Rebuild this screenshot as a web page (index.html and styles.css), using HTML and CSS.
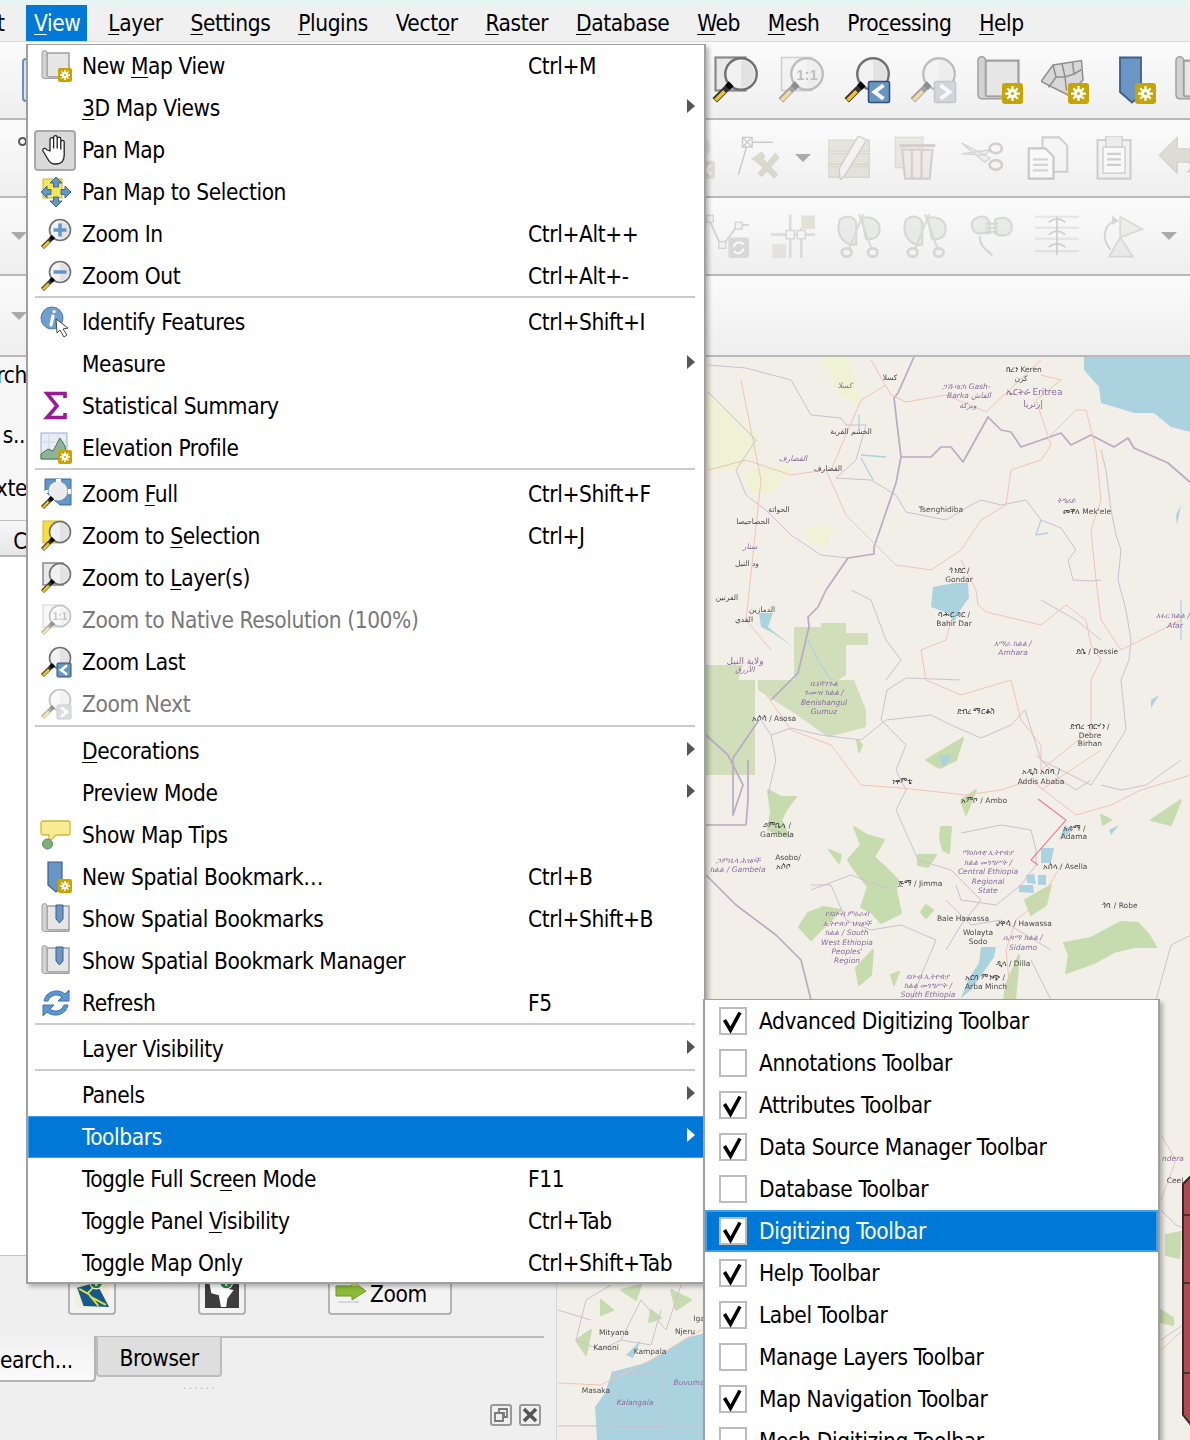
FILE: index.html
```html
<!DOCTYPE html>
<html lang="en">
<head>
<meta charset="utf-8">
<title>QGIS View menu</title>
<link rel="stylesheet" href="styles.css">
</head>
<body>
<svg class="defs" xmlns="http://www.w3.org/2000/svg">
  <symbol id="badge" viewBox="0 0 32 32"><rect x="18" y="18" width="14" height="14" rx="2" fill="#c8a400"/><g stroke="#fff" stroke-width="1.500"><path d="M25 20v10M20 25h10M21.500 21.500l7 7M28.500 21.500l-7 7"/></g><circle cx="25" cy="25" r="3" fill="#fff"/><circle cx="25" cy="25" r="1" fill="#c8a400"/></symbol>
  <symbol id="scroll" viewBox="0 0 32 32"><path d="M7 3H29V27H7Z" fill="#e6e6e6" stroke="#a0a0a0" stroke-width="1.500"/><path d="M7 3a2.500 2.500 0 0 0-5 0V26a2.500 2.500 0 0 0 2.500 2.500H29V27H8.500a1.500 1.500 0 0 1-1.500-1.500Z" fill="#d2d2d2" stroke="#a0a0a0" stroke-width="1"/></symbol>
  <symbol id="lens" viewBox="0 0 32 32"><circle cx="20" cy="12" r="10.500" fill="#f1f1f1" stroke="#707070" stroke-width="1.600"/><path d="M20 3a9 9 0 0 1 0 18Z" fill="#e2e2e2"/><path d="M13 19 2.500 29.500" stroke="#333" stroke-width="4.200"/><path d="M9 23.500 3 29.500" stroke="#f3c320" stroke-width="2.500"/><path d="M13.500 18.500 11 21" stroke="#000" stroke-width="4.500"/></symbol>
  <symbol id="newmap" viewBox="0 0 32 32"><use href="#scroll"/><use href="#badge"/></symbol>
  <symbol id="newmesh" viewBox="0 0 32 32"><path d="M0 17 8 6 27 3 28 16 18 26Z" fill="#d8d8d8" stroke="#8f8f8f"/><path d="M8 6 10 14 5 21M14 5 16 14 10 14M21 4 22 12 16 14 17 23M27 9 22 12" fill="none" stroke="#8f8f8f"/><use href="#badge"/></symbol>
  <symbol id="hand" viewBox="0 0 32 32"><path d="M11 17V5.500a1.800 1.800 0 0 1 3.600 0V14V3.500a1.800 1.800 0 0 1 3.600 0V14V5a1.800 1.800 0 0 1 3.600 0V15V8a1.700 1.700 0 0 1 3.400 0V21c0 5-2 9-8 9h-2c-3 0-5-2-7-6L4 17c-1-2 2-4 4-1Z" fill="#fff" stroke="#222" stroke-width="1.300" stroke-linejoin="round"/></symbol>
  <symbol id="pansel" viewBox="0 0 32 32"><rect x="3" y="3" width="19" height="19" fill="#f7e652" stroke="#c9b53a"/><g fill="#6696c6" stroke="#3c6a98"><path d="M16 1 22 7H18.500V11H13.500V7H10Z"/><path d="M16 31 22 25H18.500V21H13.500V25H10Z"/><path d="M1 16 7 10V13.500H11V18.500H7V22Z"/><path d="M31 16 25 10V13.500H21V18.500H25V22Z"/></g></symbol>
  <symbol id="zoomin" viewBox="0 0 32 32"><use href="#lens"/><path d="M20 5.500v13M13.500 12h13" stroke="#6696c6" stroke-width="3.500"/></symbol>
  <symbol id="zoomout" viewBox="0 0 32 32"><use href="#lens"/><path d="M13.500 12h13" stroke="#6696c6" stroke-width="3.500"/></symbol>
  <symbol id="identify" viewBox="0 0 32 32"><circle cx="12" cy="12" r="11" fill="#6f9fd0" stroke="#4d7dae"/><path d="M14 5.500h.1M13 10l-2 9" stroke="#fff" stroke-width="3.200" stroke-linecap="round"/><path d="M16 13 17 27 20 24 24 31 27 29 23 23 28 22Z" fill="#fff" stroke="#444"/></symbol>
  <symbol id="sigma" viewBox="0 0 32 32"><path d="M25 8V3.500H7L17 16 7 27.500H25V23" fill="none" stroke="#9a1a96" stroke-width="3.600"/></symbol>
  <symbol id="elev" viewBox="0 0 32 32"><rect x="1" y="1" width="26" height="26" fill="#e8eef4" stroke="#8fb0d0"/><path d="M1 10H27M1 19H27M9 1V27M18 1V27" stroke="#cfd8e0"/><path d="M1 22 8 17 13 19 20 6 25 14 27 27H1Z" fill="#8fb29a" stroke="#3f7a55"/><use href="#badge"/></symbol>
  <symbol id="zfull" viewBox="0 0 32 32"><path d="M5 1H31V27H20L13 21 5 13Z" fill="#6696c6" stroke="#3c6a98"/><path d="M16 1H21V4H16ZM28 11H31V16H28ZM5 12H8V15H5Z" fill="#fff"/><circle cx="18" cy="13" r="9.500" fill="#ececec"/><path d="M12 20 2.500 29.500" stroke="#333" stroke-width="4.200"/><path d="M8.500 23.500 3 29.500" stroke="#f3c320" stroke-width="2.500"/><path d="M12.500 19.500 10 22" stroke="#000" stroke-width="4.500"/></symbol>
  <symbol id="zsel" viewBox="0 0 32 32"><rect x="3" y="1" width="20" height="22" fill="#f7df3a" stroke="#c9b53a"/><use href="#lens"/></symbol>
  <symbol id="zlayer" viewBox="0 0 32 32"><rect x="3" y="1" width="20" height="22" fill="#e8e8e8" stroke="#8a8a8a" stroke-width="1.500"/><use href="#lens"/></symbol>
  <symbol id="znative" viewBox="0 0 32 32"><rect x="3" y="1" width="20" height="22" fill="#eee" stroke="#999"/><use href="#lens"/><text x="20" y="16" class="icon-text">1:1</text></symbol>
  <symbol id="zlast" viewBox="0 0 32 32"><use href="#lens"/><rect x="17" y="17" width="14" height="14" rx="1" fill="#6696c6" stroke="#2f4f70"/><path d="M27 19.500 21 24 27 28.500" fill="none" stroke="#fff" stroke-width="2.600"/></symbol>
  <symbol id="znext" viewBox="0 0 32 32"><use href="#lens"/><rect x="17" y="17" width="14" height="14" rx="1" fill="#aab" stroke="#889"/><path d="M21 19.500 27 24 21 28.500" fill="none" stroke="#fff" stroke-width="2.600"/></symbol>
  <symbol id="tip" viewBox="0 0 32 32"><path d="M3 2H28a2 2 0 0 1 2 2V14a2 2 0 0 1-2 2H16L9 23V16H3a2 2 0 0 1-2-2V4A2 2 0 0 1 3 2Z" fill="#f8ec90" stroke="#d1b83a" stroke-width="1.300"/><circle cx="7.500" cy="25" r="5" fill="#7fb07a" stroke="#5a8a58"/></symbol>
  <symbol id="bmnew" viewBox="0 0 32 32"><path d="M8 1H22V26L16 31 8 24Z" fill="#6a96c6" stroke="#3f5f86" stroke-width="1.200"/><use href="#badge"/></symbol>
  <symbol id="bmshow" viewBox="0 0 32 32"><use href="#scroll"/><path d="M16 2H23V16L19.500 20 16 16Z" fill="#6a96c6" stroke="#3f5f86"/></symbol>
  <symbol id="refresh" viewBox="0 0 32 32"><path d="M4 14C6 4 18 1 25 7L29 3V14H18L22 10C17 6 10 8 8 14Z" fill="#5b97d5" stroke="#3a72ad"/><path d="M28 18C26 28 14 31 7 25L3 29V18H14L10 22C15 26 22 24 24 18Z" fill="#5b97d5" stroke="#3a72ad"/></symbol>
  <symbol id="person" viewBox="0 0 32 32"><circle cx="22" cy="8" r="7" fill="#cfcfc4"/><rect x="20" y="18" width="12" height="13" rx="2" fill="#c2bda8"/><path d="M23 21l6 7M29 21l-6 7" stroke="#fff" stroke-width="2"/></symbol>
  <symbol id="tool" viewBox="0 0 32 32"><rect x="4" y="1" width="7" height="7" fill="none" stroke="#8c8c8c"/><path d="M4 1l7 7M11 1l-7 7M11 4.500H26M7 8 1 28" stroke="#8c8c8c" fill="none"/><path d="M13 18 17 14 30 28 27 31Z" fill="#b9b39c"/><path d="M10 17 18 11 21 15 16 19Z" fill="#b9b39c"/><path d="M28 12 15 27 18 30 31 16Z" fill="#b9b39c"/></symbol>
  <symbol id="pencil" viewBox="0 0 32 32"><path d="M0 3H30V11H0ZM0 12.500H30V20.500H0ZM0 22H30V30H0Z" fill="#cfcab6" stroke="#b0ab96"/><path d="M22 0 28 3 12 29 9 32 8 24Z" fill="#eee" stroke="#9a9a9a"/></symbol>
  <symbol id="trash" viewBox="0 0 32 32"><rect x="1" y="1" width="20" height="22" fill="#d9d5c3" stroke="#bbb6a0"/><path d="M4 7H30" stroke="#a99" stroke-width="2.500"/><path d="M6 10H28L26 31H8ZM13 10V31M20 10V31" fill="#e3dad6" stroke="#a99" stroke-width="1.500"/></symbol>
  <symbol id="scissors" viewBox="0 0 32 32"><path d="M1 5 22 16 18 19ZM1 13 22 10 18 14Z" fill="#e6e6e6" stroke="#aaa"/><ellipse cx="26" cy="9" rx="4.500" ry="3.500" fill="none" stroke="#a99" stroke-width="2"/><ellipse cx="26" cy="21" rx="4.500" ry="3.500" fill="none" stroke="#a99" stroke-width="2"/></symbol>
  <symbol id="copy" viewBox="0 0 32 32"><path d="M12 1H24L30 7V26H12Z" fill="#f4f4f4" stroke="#999" stroke-width="1.500"/><path d="M2 9H14L20 15V31H2Z" fill="#fff" stroke="#888" stroke-width="1.500"/><path d="M5 17H16M5 21H16M5 25H16" stroke="#aaa" stroke-width="1.500"/></symbol>
  <symbol id="paste" viewBox="0 0 32 32"><rect x="4" y="3" width="24" height="28" fill="#eee" stroke="#999" stroke-width="1.500"/><rect x="8" y="8" width="16" height="19" fill="#fff" stroke="#999"/><rect x="10" y="0" width="12" height="8" fill="#ddd" stroke="#999"/><path d="M11 13H21M11 17H21M11 21H21" stroke="#999" stroke-width="1.500"/></symbol>
  <symbol id="undo" viewBox="0 0 32 32"><path d="M14 1 1 14 14 27V19H20C24 19 25 22 22 26 29 25 31 19 30 15 29 10 24 9 14 9Z" fill="#bfb7a9" stroke="#a9a195"/></symbol>
  <symbol id="vertex" viewBox="0 0 32 32"><path d="M3 4 12 24 24 8H32" fill="none" stroke="#aaa" stroke-width="1.500"/><g fill="#eee" stroke="#aaa"><rect x="1" y="1" width="5" height="5"/><rect x="10" y="20" width="5" height="5"/><rect x="22" y="6" width="5" height="5"/></g><rect x="17" y="17" width="15" height="15" rx="2" fill="#b5b5b5"/><path d="M21 24a4 4 0 0 1 7-2M28 25a4 4 0 0 1-7 2" fill="none" stroke="#fff" stroke-width="1.600"/></symbol>
  <symbol id="snap" viewBox="0 0 32 32"><path d="M14 0V32M0 15H32M22 10V32" stroke="#bbb" stroke-width="2"/><rect x="11" y="12" width="6" height="6" fill="#f4f4f4" stroke="#aaa"/><rect x="19" y="12" width="6" height="6" fill="#f4f4f4" stroke="#aaa"/><rect x="22" y="1" width="10" height="10" fill="#c9c4ac"/><rect x="1" y="22" width="10" height="10" fill="#d6c9c9"/></symbol>
  <symbol id="split" viewBox="0 0 32 32"><path d="M2 4C8 0 15 2 14 10V22C8 24 1 18 1 10ZM18 3C24 1 31 4 31 11 31 17 26 19 21 18Z" fill="#d8dbd3" stroke="#aab0a4" stroke-width="1.500"/><path d="M19 0 9 25M16 0 25 25" stroke="#b5b5b5" stroke-width="1.500"/><ellipse cx="7" cy="28" rx="3.500" ry="3" fill="none" stroke="#b9a9a9" stroke-width="2"/><ellipse cx="26" cy="28" rx="3.500" ry="3" fill="none" stroke="#b9a9a9" stroke-width="2"/></symbol>
  <symbol id="reshape" viewBox="0 0 32 32"><path d="M5 3C11 0 15 3 15 8V14H8C2 15 0 6 5 3ZM19 4C26 1 32 4 31 11 30 16 24 17 19 14Z" fill="#d8dbd3" stroke="#aab0a4" stroke-width="1.500"/><path d="M12 7H21M12 10H21M12 13H21" stroke="#aab0a4" stroke-width="1.500"/><path d="M8 16C7 22 12 26 17 30" fill="none" stroke="#aaa" stroke-width="1.500"/></symbol>
  <symbol id="offset" viewBox="0 0 32 32"><path d="M0 2H32M0 10H32M0 18H32M0 27H32" stroke="#ccc" stroke-width="1.500"/><path d="M10 6Q16 1 22 6M10 15Q16 10 22 15M10 24Q16 19 22 24M16 2V30" fill="none" stroke="#999" stroke-width="1.200"/></symbol>
  <symbol id="rotate" viewBox="0 0 32 32"><path d="M14 2 30 11 14 17ZM14 17 23 31H6Z" fill="#e0e2dc" stroke="#b5b8ae" stroke-width="1.400"/><path d="M7 26C0 18 2 8 10 5" fill="none" stroke="#aaa" stroke-width="1.400"/><path d="M8 1 13 5 8 8Z" fill="#aaa"/></symbol>
  <symbol id="check" viewBox="0 0 28 28"><path d="M5.500 13 11.500 23 21 5.500" fill="none" stroke="#000" stroke-width="3.600"/></symbol>
  <symbol id="addline" viewBox="0 0 32 32"><rect y="6" width="32" height="26" fill="#f3efd8"/><path d="M2 13 20 8 32 31 8 30Z" fill="#155a8a"/><path d="M4 14 13 19 22 30M12 18 20 10M14 21 29 29" stroke="#dfe03a" stroke-width="1.800" fill="none"/><circle cx="20" cy="8" r="6" fill="#2d8a3f" stroke="#fff"/><path d="M20 5v6M17 8h6" stroke="#fff" stroke-width="2"/></symbol>
  <symbol id="addafrica" viewBox="0 0 32 32"><rect y="6" width="32" height="26" fill="#3d3d3d"/><path d="M4 8H16L22 14 27 15 21 23 20 31H15L13 20 6 18Z" fill="#fff"/><circle cx="20" cy="8" r="6" fill="#2d8a3f" stroke="#fff"/><path d="M20 5v6M17 8h6" stroke="#fff" stroke-width="2"/></symbol>
  <symbol id="arrow" viewBox="0 0 32 24"><path d="M1 6H17V1L31 11 17 20V16H1Z" fill="#8cbc34" stroke="#6f9a22"/><path d="M1 6H17V1L24 6Z" fill="#bcdc6a"/><path d="M3 22H24" stroke="#bbb"/></symbol>
</svg>

<div class="app">
  <div class="strip"></div>
  <nav class="menubar">
    <span class="mb mb-first">t</span>
    <span class="mb mb-on"><u>V</u>iew</span>
    <span class="mb"><u>L</u>ayer</span>
    <span class="mb"><u>S</u>ettings</span>
    <span class="mb"><u>P</u>lugins</span>
    <span class="mb">Vect<u>o</u>r</span>
    <span class="mb"><u>R</u>aster</span>
    <span class="mb"><u>D</u>atabase</span>
    <span class="mb"><u>W</u>eb</span>
    <span class="mb"><u>M</u>esh</span>
    <span class="mb">Pro<u>c</u>essing</span>
    <span class="mb"><u>H</u>elp</span>
  </nav>

  <div class="tb tb1">
    <span class="stub-blue"></span>
    <svg class="ti i48"><use href="#zlayer"/></svg>
    <svg class="ti i48 off"><use href="#znative"/></svg>
    <svg class="ti i48"><use href="#zlast"/></svg>
    <svg class="ti i48 off"><use href="#znext"/></svg>
    <svg class="ti i48"><use href="#newmap"/></svg>
    <svg class="ti i48"><use href="#newmesh"/></svg>
    <svg class="ti i48 w70"><use href="#bmnew"/></svg>
    <svg class="ti i48"><use href="#scroll"/></svg>
  </div>
  <div class="tb tb2">
    <span class="stub-pin"></span>
    <svg class="ti i44 off cut"><use href="#person"/></svg>
    <svg class="ti i44 off"><use href="#tool"/></svg>
    <span class="drop"></span>
    <svg class="ti i44 off"><use href="#pencil"/></svg>
    <svg class="ti i44 off"><use href="#trash"/></svg>
    <svg class="ti i44 off"><use href="#scissors"/></svg>
    <svg class="ti i44 off"><use href="#copy"/></svg>
    <svg class="ti i44 off"><use href="#paste"/></svg>
    <svg class="ti i44 off"><use href="#undo"/></svg>
  </div>
  <div class="tb tb3">
    <span class="drop drop-left"></span>
    <svg class="ti i44 off cut"><use href="#vertex"/></svg>
    <svg class="ti i44 off"><use href="#snap"/></svg>
    <svg class="ti i44 off"><use href="#split"/></svg>
    <svg class="ti i44 off"><use href="#split"/></svg>
    <svg class="ti i44 off"><use href="#reshape"/></svg>
    <svg class="ti i44 off"><use href="#offset"/></svg>
    <svg class="ti i44 off"><use href="#rotate"/></svg>
    <span class="drop drop-end"></span>
  </div>
  <div class="tb tb4"><span class="drop drop-left"></span></div>

  <main class="main">
    <aside class="dock">
      <div class="dock-top">
        <div class="cut-lines">
          <span class="cl cl1">rch</span>
          <span class="cl cl2">s..</span>
          <span class="cl cl3">xte</span>
        </div>
        <div class="cut-btn">C</div>
      </div>
      <div class="dock-bottom">
        <div class="btns">
          <span class="sq sq1"><svg class="i34"><use href="#addline"/></svg></span>
          <span class="sq sq2"><svg class="i34"><use href="#addafrica"/></svg></span>
          <span class="zoom-btn"><svg class="zarrow"><use href="#arrow"/></svg>Zoom</span>
        </div>
        <div class="tabs">
          <span class="tab tab-on">earch...</span>
          <span class="tab tab-off">Browser</span>
          <span class="tab-rule"></span>
        </div>
        <div class="grip">......</div>
        <div class="dock-ctl">
          <svg class="ctl" viewBox="0 0 22 22"><rect x="1" y="1" width="20" height="20" rx="2" fill="none" stroke="#999" stroke-width="2"/><path d="M9 5H17V13H14V9H9ZM5 9H13V17H5Z" fill="none" stroke="#777" stroke-width="1.800"/></svg>
          <svg class="ctl" viewBox="0 0 22 22"><rect x="1" y="1" width="20" height="20" rx="2" fill="none" stroke="#999" stroke-width="2"/><path d="M5 5 17 17M17 5 5 17" stroke="#555" stroke-width="3.600"/></svg>
        </div>
      </div>
    </aside>

    <section class="map">
      <svg class="mapsvg" viewBox="556 357 634 1083">
        <rect x="556" y="357" width="634" height="1083" fill="#f2efe9"/>
        <g class="farm">
          <path d="M707 392 730 412 756 435 752 455 735 468 705 470Z"/><path d="M742 472 790 468 772 490 750 492Z"/><path d="M822 360 848 360 858 405 838 392Z"/><path d="M805 530 830 528 825 545 810 542Z"/>
        </g>
        <g class="park">
          <path d="M793 627H820V623H845V633H867V645H845V675L837 680H793Z"/>
          <path d="M757 680H853L865 710V727L827 737 793 713 757 690Z"/>
          <path d="M705 665H742L737 680H754V775H705Z"/>
        </g>
        <g class="forest">
          <path d="M767 790 780 797 795 797 785 810 780 820 788 837 775 832 767 830 770 812Z"/>
          <path d="M853 827 866 835 883 840 873 857 885 868 897 880 895 890 900 913 880 923 870 912 860 907 867 887 855 872 847 860 860 845Z"/>
          <path d="M1063 943 1090 938 1120 922 1137 923 1148 935 1155 947 1133 947 1113 952 1093 963 1065 973 1068 955Z"/>
          <path d="M940 827 950 827 949 840 948 853 942 850 939 838Z"/><path d="M917 855 935 855 927 867 917 865Z"/>
          <path d="M807 913 823 907 840 910 825 925 810 940 798 927Z"/><path d="M855 968 872 950 870 975 858 985Z"/>
          <path d="M1005 985 1018 955 1014 1000H1003Z"/><path d="M1024 900 1050 885 1045 905 1030 915Z"/>
          <path d="M925 760 962 738 955 760 938 768Z"/><path d="M1150 820 1180 800 1170 825Z"/><path d="M960 800 975 790 965 815Z"/>
          <path d="M856 740 861 745 858 752Z"/><path d="M828 850 840 855 838 863Z"/><path d="M1090 950 1100 945 1095 958Z"/>
          <path d="M925 905 932 910 925 918 920 912Z"/><path d="M890 975 898 972 893 985Z"/><path d="M1100 815 1110 820 1102 825Z"/>
          <path d="M1165 1235 1180 1232 1178 1258 1165 1255Z"/><path d="M1160 1310 1172 1318 1172 1325 1160 1322Z"/>
          <path d="M620 1290 640 1285 635 1300Z"/><path d="M670 1290 690 1300 675 1310Z"/><path d="M575 1340 590 1330 585 1355Z"/><path d="M600 1300 612 1310 600 1315Z"/><path d="M650 1310 660 1318 648 1322Z"/>
        </g>
        <g fill="#aad3df">
          <path d="M1083 357H1190V432L1170 427 1153 413 1133 413 1107 405 1100 403 1098 387 1083 370Z"/>
          <path d="M932 587 953 583 967 583 968 598 957 613 953 623 947 613 930 607Z"/>
          <path d="M758 613 772 613 767 627 793 648 772 633 760 627Z"/>
          <path d="M1040 848H1053L1050 863H1040Z"/><path d="M1018 885H1032L1033 893 1018 892Z"/><path d="M1025 875 1033 874 1035 884 1026 883Z"/><path d="M1037 875H1045V885H1037Z"/>
          <path d="M980 947H995L993 957 970 990 960 998 967 980 978 963Z"/>
          <path d="M938 755H952L942 768Z"/><path d="M1064 825 1072 830 1058 840Z"/>
          <path d="M1175 515 1180 505 1176 525Z"/><path d="M1150 700 1158 695 1150 708Z"/><path d="M1108 830 1118 825 1110 835Z"/>
          <path d="M704 1333 685 1338 664 1352 644 1363 611 1372 604 1393 594 1407 596 1440H704Z"/>
          <path d="M625 1355 640 1340 632 1358Z"/>
        </g>
        <g fill="none" stroke="#aad3df" stroke-width="1.300">
          <path d="M860 455 885 457M860 458 872 480M858 415V430M1040 520 1035 535 1047 533"/>
          <path d="M807 640 817 660 830 680M1180 600V640"/>
        </g>
        <g fill="none" stroke="#cbc0d2" stroke-width="1">
          <path d="M707 365 745 368 790 380 810 415 840 418 845 425 865 425 855 460 835 478 870 480 895 495"/>
          <path d="M707 392 735 420 755 440 735 470 745 495 765 510 790 535 820 555 847 558"/>
          <path d="M895 495 905 512 945 520 970 505 980 500 1000 505 1025 500 1040 520 1060 528 1075 550 1067 560 1072 580 1090 581 1100 580"/>
          <path d="M1100 450 1105 470 1110 510 1115 535 1120 550 1117 580 1125 610 1130 640 1128 660 1120 680"/>
          <path d="M960 680 905 678 886 690 880 720 905 745 895 770 905 790 895 810 917 860 950 870 980 900 960 925 945 950"/>
          <path d="M760 720 770 735 790 728 820 735 860 740 885 720 930 715 950 725 980 738 1010 725 1024 710 1040 760 1090 785 1100 770 1125 730 1120 680"/>
          <path d="M767 795 775 760 770 735M1035 755 1060 780 1075 790 1090 780M1100 785 1120 790 1145 785 1180 760"/>
          <path d="M960 833 1000 825 1030 830 1035 850 1035 865 1020 885 995 905 960 900 955 885M945 900 970 925 1000 920 1050 950"/>
          <path d="M810 890 850 875 890 890M810 885 830 885 845 920 870 930 900 925 935 940 910 1000"/>
          <path d="M1155 1000 1170 945 1190 935M1040 600 1075 620 1100 640M1160 1210 1175 1225 1182 1228M1160 1340 1182 1325"/>
          <path d="M850 590 870 600 885 640 900 660 885 680M1050 1000 1030 960"/>
          <path d="M610 1285 585 1300 575 1340 600 1350 620 1340 640 1300M640 1300 665 1330 680 1285M557 1310 590 1320M620 1340 650 1345 660 1310"/>
          <path d="M611 1372V1426H660V1372ZM557 1426H704"/>
        </g>
        <g fill="none" stroke="#bbaac5" stroke-width="1.700" stroke-linejoin="round">
          <path d="M913 357 897 393 893 398 900 457 895 483 873 547 873 554 847 558 825 590 817 607 807 617 808 627 797 673 770 700"/>
          <path d="M900 457H930L940 447H950L962 462 987 417 1000 430 1010 432 1020 447 1060 433 1070 445 1080 440 1090 435 1113 447 1127 438 1133 448 1167 463 1190 483"/>
          <path d="M705 735 727 755 742 785 732 815 732 758 758 720M747 760 747 800 745 825 730 825 705 825M705 875 735 905 775 935 800 960 810 1000"/>
        </g>
        <g fill="none" stroke="#f2c3b0" stroke-width="1">
          <path d="M707 470 745 460 790 475 825 470 845 515 895 565 930 570 945 560 960 550 980 520 1005 505 1010 470 1040 460 1050 445 1035 400 1060 380 1040 375"/>
          <path d="M870 360 890 395 905 402 945 395 985 412 1040 360M830 470 860 400 885 385"/>
          <path d="M1045 440 1075 410 1085 410 1095 450 1100 500 1090 530 1095 580 1100 620 1120 650 1140 640 1180 620"/>
          <path d="M960 560 975 590 977 605 985 612 1040 625 1065 605 1085 620 1090 645 1100 660 1090 680"/>
          <path d="M950 620 945 640 920 650 925 680 960 695 1010 680 1020 720 1040 745 1040 770 1090 730 1090 680"/>
          <path d="M757 683 790 730 830 745 860 785 900 788 965 795 1000 790 1030 780 1075 815 1110 805 1140 790 1190 775"/>
          <path d="M1040 790 1100 750M1060 865 1040 900 1015 920 1005 950 1010 1000M1000 1000 995 1010"/>
          <path d="M740 380 760 480 745 620 770 650M1160 1135 1175 1160 1160 1200M1160 1350 1182 1330"/>
          <path d="M557 1383 600 1385 650 1360 700 1330"/>
        </g>
        <path d="M1037 799 1065 820 1030 860 1037 865" fill="none" stroke="#ec7a8a" stroke-width="1.100"/>
        <g class="mp">
          <text x="1005" y="372">ከረን Keren</text><text x="1020" y="381" class="mid">كرن</text>
          <text x="889" y="380" class="mid">كسلا</text><text x="827" y="471" class="mid">القضارف</text>
          <text x="778" y="512" class="mid">الحواتة</text><text x="940" y="512" class="mid">Tsenghidiba</text>
          <text x="850" y="434" class="mid">الخشم القربة</text><text x="752" y="524" class="mid">الحصاحيصا</text>
          <text x="746" y="566" class="mid">ود النيل</text><text x="726" y="600" class="mid">الفرنين</text><text x="761" y="612" class="mid">الدمازين</text><text x="743" y="622" class="mid">القدي</text>
          <text x="958" y="573" class="mid">ጎንደር /</text><text x="958" y="582" class="mid">Gondar</text>
          <text x="953" y="617" class="mid">ባሕር ዳር /</text><text x="953" y="626" class="mid">Bahir Dar</text>
          <text x="1086" y="514" class="mid">መቐለ Mek'ele</text><text x="1096" y="654" class="mid">ደሴ / Dessie</text>
          <text x="975" y="714" class="mid">ደብረ ማርቆስ</text><text x="1089" y="729" class="mid">ደብረ ብርሃን /</text><text x="1089" y="738" class="mid">Debre</text><text x="1089" y="746" class="mid">Birhan</text>
          <text x="1040" y="774" class="mid">አዲስ አበባ /</text><text x="1040" y="784" class="mid">Addis Ababa</text>
          <text x="983" y="803" class="mid">አምቦ / Ambo</text><text x="901" y="784" class="mid">ነቀምቴ</text><text x="773" y="721" class="mid">አሶሳ / Asosa</text>
          <text x="1073" y="831" class="mid">አዳማ /</text><text x="1073" y="839" class="mid">Adama</text><text x="1064" y="869" class="mid">አሰላ / Asella</text>
          <text x="776" y="828" class="mid">ጋምቤላ /</text><text x="776" y="837" class="mid">Gambela</text><text x="787" y="860" class="mid">Asobo/</text><text x="782" y="869" class="mid">አሶቦ</text>
          <text x="919" y="886" class="mid">ጅማ / Jimma</text><text x="962" y="921" class="mid">Bale Hawassa</text><text x="1023" y="926" class="mid">ሀዋሳ / Hawassa</text>
          <text x="977" y="935" class="mid">Wolayta</text><text x="977" y="944" class="mid">Sodo</text><text x="1012" y="966" class="mid">ዲላ / Dilla</text><text x="1119" y="908" class="mid">ጎባ / Robe</text>
          <text x="984" y="980" class="mid">አርባ ምንጭ /</text><text x="985" y="989" class="mid">Arba Minch</text>
          <text x="1174" y="1183" class="mid">Ceel</text>
          <text x="613" y="1335" class="mid">Mityana</text><text x="605" y="1350" class="mid">Kanoni</text><text x="649" y="1354" class="mid">Kampala</text><text x="684" y="1334" class="mid">Njeru</text><text x="698" y="1321" class="mid">Iga</text><text x="595" y="1393" class="mid">Masaka</text>
        </g>
        <g class="mr">
          <text x="844" y="388" class="mid">كسلا</text><text x="792" y="461" class="mid">القضارف</text><text x="749" y="549" class="mid">سنار</text>
          <text x="965" y="389" class="mid">ጋሽ-ባርካ Gash-</text><text x="968" y="398" class="mid">Barka القاش</text><text x="967" y="408" class="mid">وبركة</text>
          <text x="1033" y="395" class="mid rb">ኤርትራ Eritrea</text><text x="1032" y="407" class="mid rb">إرتريا</text>
          <text x="1012" y="646" class="mid">አማራ ክልል /</text><text x="1012" y="655" class="mid">Amhara</text>
          <text x="1065" y="503" class="mid">ትግራይ</text><text x="1172" y="618" class="mid">አፋር ክልል /</text><text x="1174" y="628" class="mid">Afar</text>
          <text x="744" y="664" class="mid rb">ولاية النيل</text><text x="744" y="672" class="mid">الأزرق</text>
          <text x="823" y="686" class="mid">ቤኒሻንጉል</text><text x="823" y="695" class="mid">ጉሙዝ ክልል /</text><text x="823" y="705" class="mid">Benishangul</text><text x="823" y="714" class="mid">Gumuz</text>
          <text x="737" y="863" class="mid">ጋምቤላ ሕዝቦች</text><text x="737" y="872" class="mid">ክልል / Gambela</text>
          <text x="987" y="855" class="mid">ማዕከላዊ ኢትዮጵያ</text><text x="987" y="865" class="mid">ክልል መንግሥት /</text><text x="987" y="874" class="mid">Central Ethiopia</text><text x="987" y="884" class="mid">Regional</text><text x="987" y="893" class="mid">State</text>
          <text x="846" y="916" class="mid">የደቡብ ምዕራብ</text><text x="846" y="926" class="mid">ኢትዮጵያ ህዝቦች</text><text x="846" y="935" class="mid">ክልል / South</text><text x="846" y="945" class="mid">West Ethiopia</text><text x="846" y="954" class="mid">Peoples'</text><text x="846" y="963" class="mid">Region</text>
          <text x="1022" y="940" class="mid">ሲዳማ ክልል /</text><text x="1022" y="950" class="mid">Sidamo</text>
          <text x="927" y="979" class="mid">ደቡብ ኢትዮጵያ</text><text x="927" y="988" class="mid">ክልል መንግሥት /</text><text x="927" y="997" class="mid">South Ethiopia</text>
          <text x="1172" y="1161" class="mid">ndera</text><text x="688" y="1385" class="mid">Buvuma</text><text x="634" y="1405" class="mid">Kalangala</text>
        </g>
        <path d="M1194 1172 1182 1184V1415L1194 1430Z" fill="#b04a50" stroke="#2a2a2a" stroke-width="2"/>
        <path d="M1182 1215H1190M1182 1283H1190M1182 1373H1190" stroke="#2a2a2a" stroke-width="1.500"/>
      </svg>
    </section>
  </main>

  <div class="menu">
    <div class="row"><svg class="ic"><use href="#newmap"/></svg><span class="lb">New <u>M</u>ap View</span><span class="sc">Ctrl+M</span></div>
    <div class="row"><span class="ic"></span><span class="lb"><u>3</u>D Map Views</span><span class="sc"></span><span class="tri"></span></div>
    <div class="row"><span class="ic-on"><svg class="ic"><use href="#hand"/></svg></span><span class="lb">Pan Map</span></div>
    <div class="row"><svg class="ic"><use href="#pansel"/></svg><span class="lb">Pan Map to Selection</span></div>
    <div class="row"><svg class="ic"><use href="#zoomin"/></svg><span class="lb">Zoom In</span><span class="sc">Ctrl+Alt++</span></div>
    <div class="row"><svg class="ic"><use href="#zoomout"/></svg><span class="lb">Zoom Out</span><span class="sc">Ctrl+Alt+-</span></div>
    <div class="sep"></div>
    <div class="row"><svg class="ic"><use href="#identify"/></svg><span class="lb">Identify Features</span><span class="sc">Ctrl+Shift+I</span></div>
    <div class="row"><span class="ic"></span><span class="lb">Measure</span><span class="sc"></span><span class="tri"></span></div>
    <div class="row"><svg class="ic"><use href="#sigma"/></svg><span class="lb">Statistical Summary</span></div>
    <div class="row"><svg class="ic"><use href="#elev"/></svg><span class="lb">Elevation Profile</span></div>
    <div class="sep"></div>
    <div class="row"><svg class="ic"><use href="#zfull"/></svg><span class="lb">Zoom <u>F</u>ull</span><span class="sc">Ctrl+Shift+F</span></div>
    <div class="row"><svg class="ic"><use href="#zsel"/></svg><span class="lb">Zoom to <u>S</u>election</span><span class="sc">Ctrl+J</span></div>
    <div class="row"><svg class="ic"><use href="#zlayer"/></svg><span class="lb">Zoom to <u>L</u>ayer(s)</span></div>
    <div class="row dis"><svg class="ic off"><use href="#znative"/></svg><span class="lb">Zoom to Native Resolution (100%)</span></div>
    <div class="row"><svg class="ic"><use href="#zlast"/></svg><span class="lb">Zoom Last</span></div>
    <div class="row dis"><svg class="ic off"><use href="#znext"/></svg><span class="lb">Zoom Next</span></div>
    <div class="sep sep-wide"></div>
    <div class="row"><span class="ic"></span><span class="lb"><u>D</u>ecorations</span><span class="sc"></span><span class="tri"></span></div>
    <div class="row"><span class="ic"></span><span class="lb">Preview Mode</span><span class="sc"></span><span class="tri"></span></div>
    <div class="row"><svg class="ic"><use href="#tip"/></svg><span class="lb">Show Map Tips</span></div>
    <div class="row"><svg class="ic"><use href="#bmnew"/></svg><span class="lb">New Spatial Bookmark…</span><span class="sc">Ctrl+B</span></div>
    <div class="row"><svg class="ic"><use href="#bmshow"/></svg><span class="lb">Show Spatial Bookmarks</span><span class="sc">Ctrl+Shift+B</span></div>
    <div class="row"><svg class="ic"><use href="#bmshow"/></svg><span class="lb">Show Spatial Bookmark Manager</span></div>
    <div class="row"><svg class="ic"><use href="#refresh"/></svg><span class="lb">Refresh</span><span class="sc">F5</span></div>
    <div class="sep"></div>
    <div class="row"><span class="ic"></span><span class="lb">Layer Visibility</span><span class="sc"></span><span class="tri"></span></div>
    <div class="sep"></div>
    <div class="row"><span class="ic"></span><span class="lb">Panels</span><span class="sc"></span><span class="tri"></span></div>
    <div class="row hl"><span class="ic"></span><span class="lb">Toolbars</span><span class="sc"></span><span class="tri"></span></div>
    <div class="row"><span class="ic"></span><span class="lb">Toggle Full Scr<u>e</u>en Mode</span><span class="sc">F11</span></div>
    <div class="row"><span class="ic"></span><span class="lb">Toggle Panel <u>V</u>isibility</span><span class="sc">Ctrl+Tab</span></div>
    <div class="row"><span class="ic"></span><span class="lb">Toggle Map Only</span><span class="sc">Ctrl+Shift+Tab</span></div>
  </div>

  <div class="submenu">
    <div class="srow"><span class="cb"><svg class="ck"><use href="#check"/></svg></span>Advanced Digitizing Toolbar</div>
    <div class="srow"><span class="cb"></span>Annotations Toolbar</div>
    <div class="srow"><span class="cb"><svg class="ck"><use href="#check"/></svg></span>Attributes Toolbar</div>
    <div class="srow"><span class="cb"><svg class="ck"><use href="#check"/></svg></span>Data Source Manager Toolbar</div>
    <div class="srow"><span class="cb"></span>Database Toolbar</div>
    <div class="srow shl"><span class="cb"><svg class="ck"><use href="#check"/></svg></span>Digitizing Toolbar</div>
    <div class="srow"><span class="cb"><svg class="ck"><use href="#check"/></svg></span>Help Toolbar</div>
    <div class="srow"><span class="cb"><svg class="ck"><use href="#check"/></svg></span>Label Toolbar</div>
    <div class="srow"><span class="cb"></span>Manage Layers Toolbar</div>
    <div class="srow"><span class="cb"><svg class="ck"><use href="#check"/></svg></span>Map Navigation Toolbar</div>
    <div class="srow"><span class="cb"></span>Mesh Digitizing Toolbar</div>
  </div>
</div>
</body>
</html>
```
FILE: styles.css
```css
* { box-sizing: border-box; }
html, body { margin: 0; padding: 0; background: #f0f0f0; }
body {
  font-family: "DejaVu Sans Condensed", "DejaVu Sans", sans-serif;
  font-stretch: condensed;
  font-size: 22.500px;
  letter-spacing: -.4px;
  color: #000;
}
u { text-underline-offset: 3px; text-decoration-thickness: 1px; }
.defs { display: none; }
.app { position: relative; width: 1190px; height: 1440px; overflow: hidden; display: flex; flex-direction: column; }
.strip { height: 5px; background: #e6f6f3; flex: none; }
.menubar { height: 37px; flex: none; display: flex; align-items: stretch; background: #f0f0f0; border-bottom: 1px solid #d9d9d9; }
.mb { padding: 0 13.900px; line-height: 36px; white-space: nowrap; }
.mb-first { width: 26px; padding: 0; text-indent: -3px; }
.mb-on { background: #0078d7; color: #fff; padding: 0 7px 0 8px; margin-right: 7px; }

.tb { flex: none; display: flex; align-items: center; background: linear-gradient(#fbfbfb, #efefef); border-bottom: 2px solid #b9b9b9; }
.tb1 { height: 78px; padding-left: 702px; }
.tb2 { height: 78px; padding-left: 671px; }
.tb3 { height: 78px; padding-left: 705px; }
.tb4 { height: 81px; }
.stub-blue { position: absolute; left: 22px; top: 58px; width: 10px; height: 44px; background: #dbe6f2; border: 2px solid #6a8fb8; border-radius: 4px; }
.stub-pin { position: absolute; left: 18px; top: 137px; width: 9px; height: 9px; border: 2px solid #555; border-radius: 50%; }
.ti { flex: none; display: block; }
.i48 { width: 48px; height: 48px; margin: 0 9px; }
.i44 { width: 44px; height: 44px; margin: 0 11px; }
.w70 { margin-left: 10px; margin-right: 8px; }
.off { opacity: .42; }
.cut { margin-left: 0; }
.icon-text { font-family: "Liberation Sans", sans-serif; font-size: 10px; font-weight: 700; fill: #777; text-anchor: middle; font-stretch: normal; letter-spacing: 0; }
.drop { flex: none; width: 0; height: 0; border-left: 8px solid transparent; border-right: 8px solid transparent; border-top: 8px solid #aaa; margin-left: 3px; margin-right: 6px; }
.drop-left { position: absolute; left: 11px; margin: 0; }
.drop-end { margin-left: 5px; }

.main { flex: 1; min-height: 0; display: flex; }
.dock { width: 556px; flex: none; display: flex; flex-direction: column; background: #f0f0f0; }
.dock-top { height: 899px; flex: none; background: #fff; border-bottom: 1px solid #c4c4c4; }
.cut-lines { width: 27px; height: 164px; background: #f6f6f6; overflow: hidden; display: flex; flex-direction: column; align-items: flex-end; border-bottom: 1px solid #bdbdbd; }
.cl { white-space: nowrap; line-height: 26px; }
.cl1 { margin-top: 5px; }
.cl2 { margin-top: 34px; margin-right: 2px; }
.cl3 { margin-top: 27px; }
.cut-btn { width: 27px; height: 36px; background: linear-gradient(#f7f7f7, #e6e6e6); border-bottom: 2px solid #b5b5b5; text-align: right; line-height: 40px; overflow: hidden; }
.dock-bottom { flex: 1; min-height: 0; display: flex; flex-direction: column; background: #efefef; }
.btns { height: 59px; flex: none; display: flex; align-items: flex-end; padding-left: 68px; }
.sq { width: 48px; height: 40px; border: 2px solid #b3b3b3; border-top: 0; border-radius: 0 0 4px 4px; display: flex; justify-content: center; align-items: flex-end; padding-bottom: 5px; background: #f3f3f3; }
.sq2 { margin-left: 82px; }
.i34 { width: 34px; height: 34px; }
.zoom-btn { margin-left: 82px; width: 124px; height: 40px; border: 2px solid #b3b3b3; border-top: 0; border-radius: 0 0 4px 4px; display: flex; align-items: center; padding: 0 0 1px 5px; background: #f3f3f3; }
.zarrow { width: 32px; height: 24px; margin-right: 3px; margin-top: -3px; }
.tabs { margin-top: 21px; height: 46px; flex: none; display: flex; align-items: flex-start; position: relative; }
.tab { display: block; white-space: nowrap; }
.tab-on { width: 96px; height: 46px; background: linear-gradient(#f0f0f0, #fafafa); border: 2px solid #b5b5b5; border-left: 0; border-top: 0; border-radius: 0 0 4px 0; line-height: 48px; text-align: right; padding-right: 26px; overflow: hidden; }
.tab-off { width: 126px; height: 41px; background: #dedede; border: 2px solid #bcbcbc; border-top-width: 1px; border-radius: 0 0 4px 4px; line-height: 42px; text-align: center; }
.tab-rule { flex: none; width: 322px; height: 2px; background: #bcbcbc; }
.grip { height: 12px; flex: none; padding: 2px 0 0 183px; font-size: 11px; line-height: 4px; letter-spacing: 2.500px; color: #aaa; }
.dock-ctl { display: flex; justify-content: flex-end; gap: 7px; padding: 10px 15px 0 0; }
.ctl { width: 22px; height: 22px; display: block; }

.map { flex: 1; min-width: 0; overflow: hidden; border-left: 1px solid #d5d5d5; }
.mapsvg { display: block; width: 634px; height: 1083px; filter: blur(.4px); }
.farm path { fill: #f0f2d6; stroke: #f0f2d6; stroke-width: 4; stroke-linejoin: round; }
.park path { fill: #d0deba; }
.forest path { fill: #c6dcae; stroke: #c6dcae; stroke-width: 2; stroke-linejoin: round; }
.mp text, .mr text { font-family: "DejaVu Sans", sans-serif; font-stretch: normal; font-size: 7.500px; letter-spacing: 0; }
.mp text { fill: #4a4a4a; }
.mr text { fill: #8b6a9c; font-style: italic; }
.mr .rb { font-size: 9px; font-style: normal; }
.mid { text-anchor: middle; }

.menu { position: absolute; left: 26px; top: 44px; width: 680px; height: 1240px; overflow: hidden; background: #fff; border: 2px solid #a0a0a0; border-top-width: 1px; padding: 0; box-shadow: 3px 3px 4px rgba(0,0,0,.25); z-index: 2; }
.row { height: 42px; display: grid; grid-template-columns: 42px 446px 159px 14px; align-items: center; padding-left: 12px; white-space: nowrap; position: relative; }
.row > .ic, .row > .ic-on { justify-self: start; }
.ic { display: block; width: 32px; height: 32px; }
.row > svg.ic { margin-top: -1px; }
.ic-on { width: 42px; height: 41px; margin-left: -6px; background: #d9d9d9; border: 2px solid #a9a9a9; border-radius: 4px; display: flex; align-items: center; justify-content: center; }
.lb { display: block; }
.dis { color: #787878; }
.sep { height: 5px; margin-top: -1px; margin-left: 7px; margin-right: 9px; border-top: 2px solid #cccccc; }
.sep-wide { margin-top: 0; }
.tri { width: 0; height: 0; border-left: 8px solid #555; border-top: 7px solid transparent; border-bottom: 7px solid transparent; margin-bottom: 4px; }
.hl { background: #0078d7; color: #fff; box-shadow: inset 0 0 0 1px #3aa0f0; }
.hl .tri { border-left-color: #fff; }

.submenu { position: absolute; left: 703px; top: 999px; width: 457px; height: 460px; background: #fff; border: 2px solid #a0a0a0; border-top-width: 1px; box-shadow: 3px 3px 4px rgba(0,0,0,.25); z-index: 3; }
.srow { height: 42px; display: flex; align-items: center; padding-left: 14px; white-space: nowrap; }
.cb { width: 28px; height: 28px; margin-right: 12px; flex: none; background: #fff; border: 2px solid #bcbcbc; display: block; }
.ck { display: block; width: 28px; height: 28px; margin: -2px; }
.shl { background: #0078d7; color: #fff; box-shadow: inset 0 0 0 2px #3aa0f0; }
```
